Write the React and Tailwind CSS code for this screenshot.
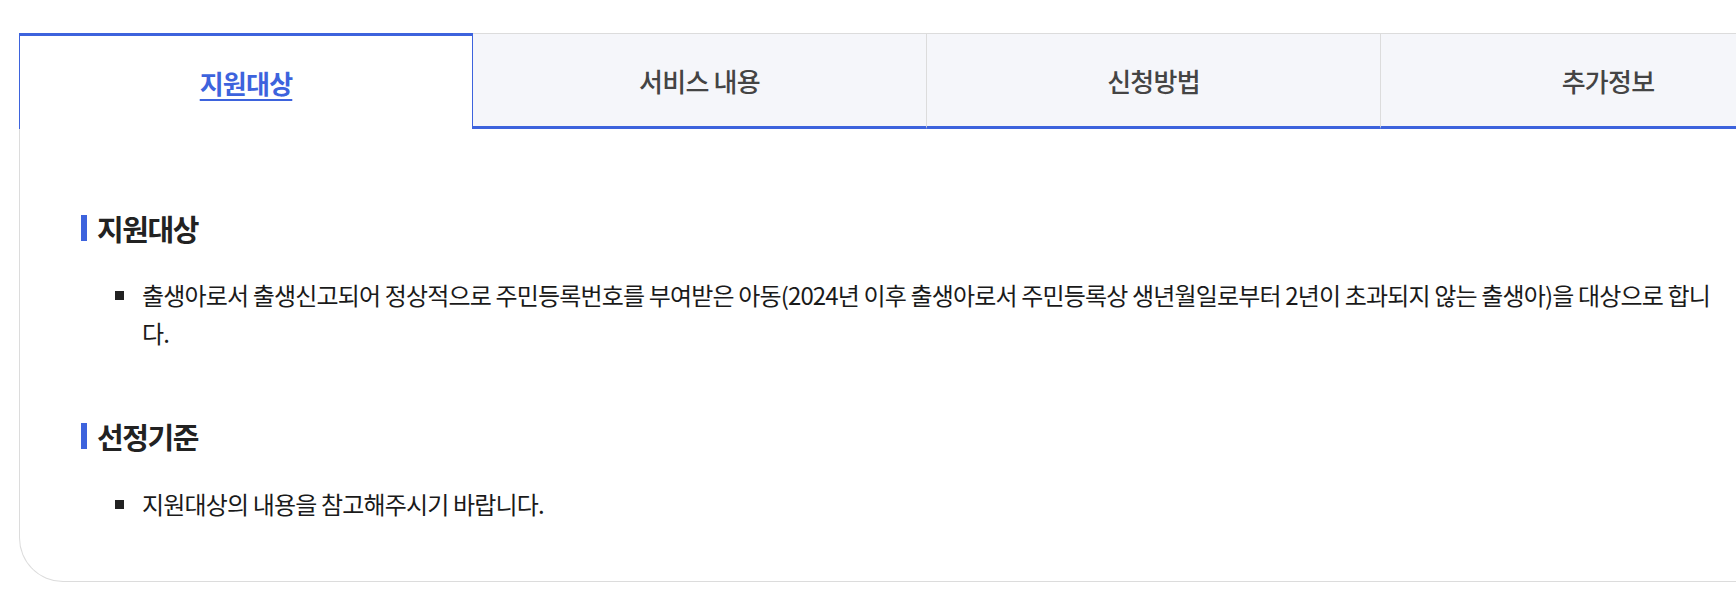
import React from "react";

const font = { fontFamily: '"Noto Sans CJK KR", "Noto Sans", sans-serif' };

function Tab({ label, active, last }) {
  if (active) {
    return (
      <div className="flex h-[96px] w-[454px] items-center justify-center border-x border-t-[3px] border-[#3d63dd] bg-white pb-[1px]">
        <span className="text-[26px] font-bold tracking-[-0.03em] text-[#3d63dd] underline decoration-[2px] underline-offset-[5px]">
          {label}
        </span>
      </div>
    );
  }
  return (
    <div
      className={
        "flex h-[96px] w-[454px] items-center justify-center border-t border-b-[3px] border-t-[#dcdcdc] border-b-[#3d63dd] bg-[#f5f6fa] pt-[1px] " +
        (last ? "" : "border-r border-r-[#dcdcdc]")
      }
    >
      <span className="text-[26px] font-medium tracking-[-0.03em] text-[#444]">{label}</span>
    </div>
  );
}

function Heading({ children }) {
  return (
    <div className="flex h-[40px] items-center gap-[10px]">
      <div className="h-[26px] w-[6px] bg-[#3d63dd]" />
      <h3 className="text-[29px] font-bold leading-[40px] tracking-[-0.05em] text-[#222]">{children}</h3>
    </div>
  );
}

function Bullet({ children }) {
  return (
    <div className="ml-[34px] flex">
      <div className="flex h-[38px] w-[9px] shrink-0 items-center">
        <div className="h-[9px] w-[9px] bg-[#222]" />
      </div>
      <p className="ml-[18px] w-[1585px] text-[24px] leading-[38px] tracking-[-0.035em] text-[#1a1a1a]">{children}</p>
    </div>
  );
}

export default function App() {
  return (
    <div className="h-[607px] w-[1736px] overflow-hidden bg-white" style={font}>
      <div className="ml-[19px] mt-[33px] w-[1816px]">
        <div className="flex">
          <Tab label="지원대상" active />
          <Tab label="서비스 내용" />
          <Tab label="신청방법" />
          <Tab label="추가정보" last />
        </div>
        <div className="rounded-bl-[44px] border-b border-l border-[#dcdcdc] pb-[58px] pl-[61px] pt-[79px]">
          <Heading>지원대상</Heading>
          <div className="mt-[28px]">
            <Bullet>
              출생아로서 출생신고되어 정상적으로 주민등록번호를 부여받은 아동(2024년 이후 출생아로서 주민등록상 생년월일로부터 2년이 초과되지 않는 출생아)을 대상으로 합니다.
            </Bullet>
          </div>
          <div className="mt-[64px]">
            <Heading>선정기준</Heading>
          </div>
          <div className="mt-[29px]">
            <Bullet>지원대상의 내용을 참고해주시기 바랍니다.</Bullet>
          </div>
        </div>
      </div>
    </div>
  );
}
